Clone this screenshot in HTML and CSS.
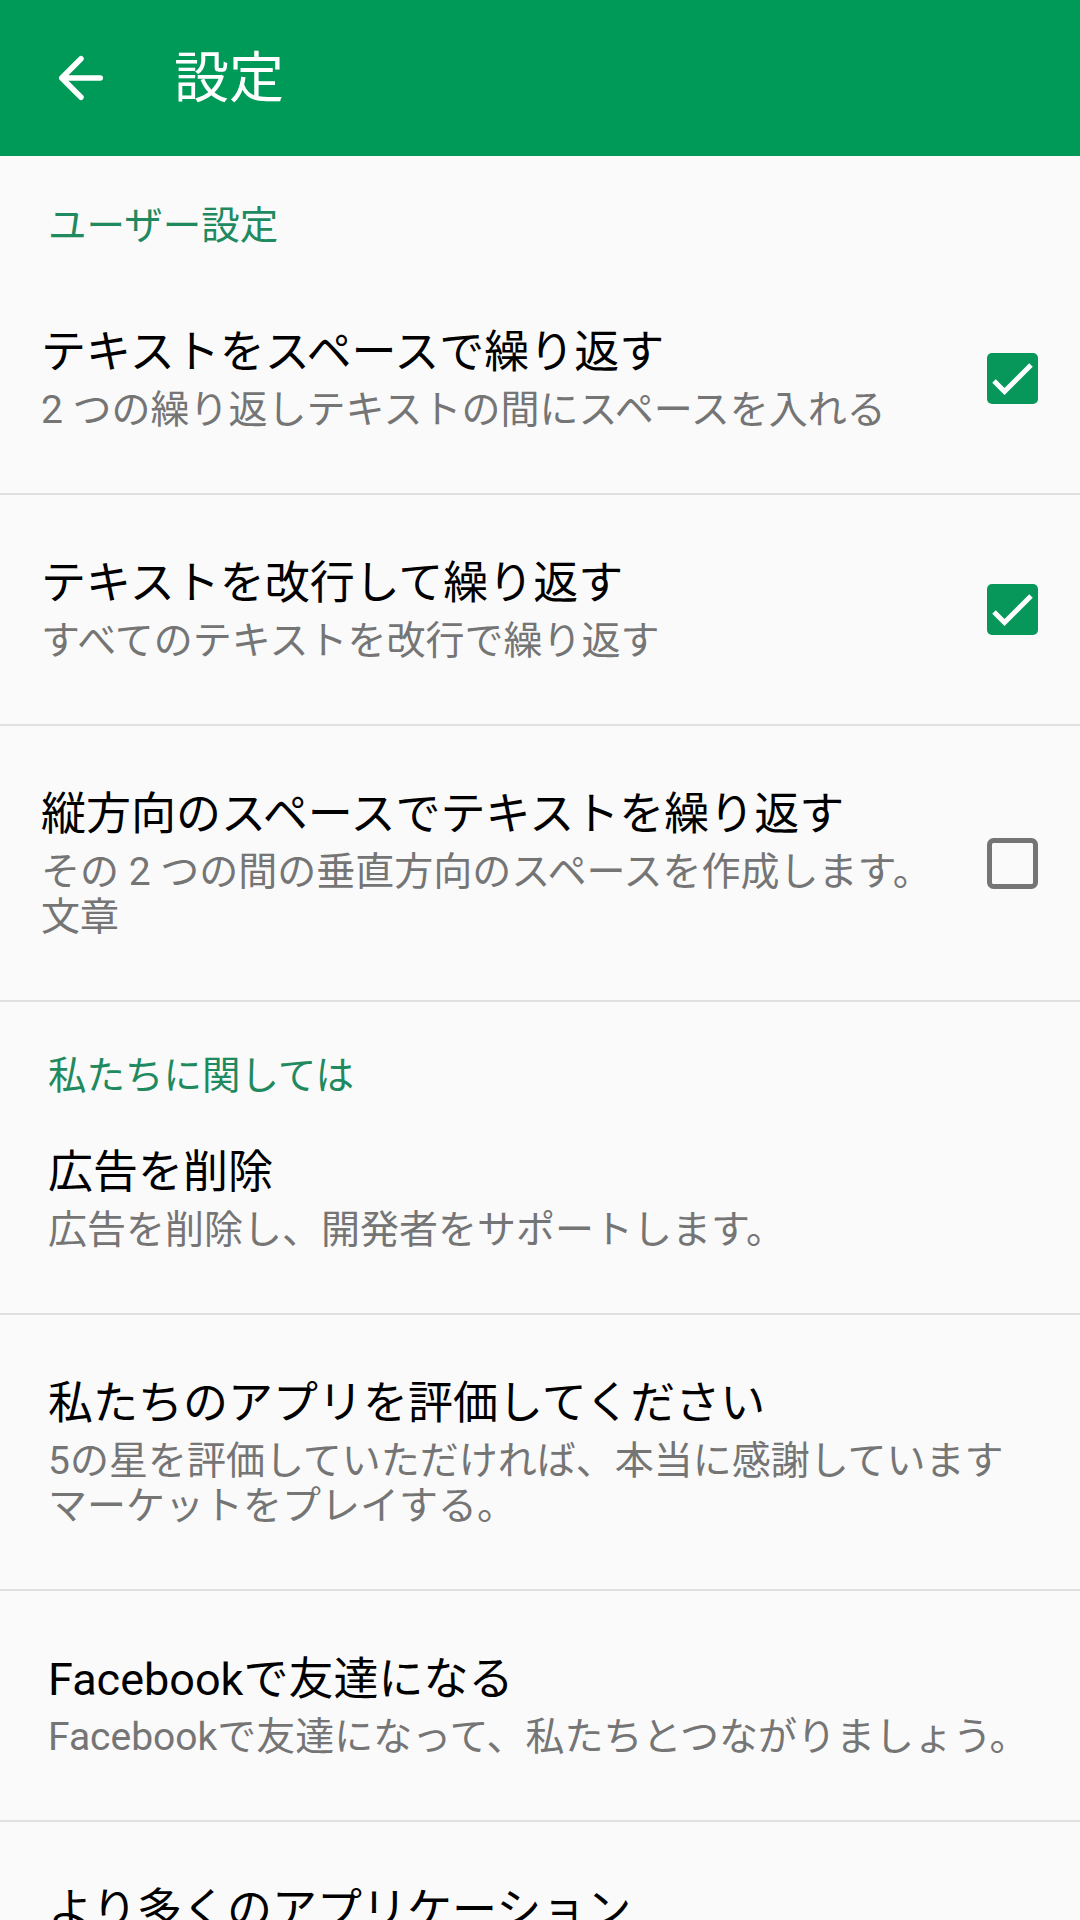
FILE: index.html
```html
<!DOCTYPE html>
<html lang="ja">
<head>
  <meta charset="UTF-8" />
  <meta name="viewport" content="width=device-width, initial-scale=1.0" />
  <title>設定</title>
  <link rel="stylesheet" href="styles.css">
</head>
<body>
  <div class="appbar">
    <svg class="back" width="66" height="66" viewBox="0 0 24 24">
      <path d="M19 12H5M12 5l-7 7 7 7" fill="none" stroke="#fff" stroke-width="2" stroke-linecap="round" stroke-linejoin="round"/>
    </svg>
    <h1 class="appbar-title">設定</h1>
  </div>

  <div class="category">ユーザー設定</div>

  <div class="pref">
    <div class="pref-text">
      <div class="pref-title">テキストをスペースで繰り返す</div>
      <div class="pref-summary">2 つの繰り返しテキストの間にスペースを入れる</div>
    </div>
    <svg class="check" width="51" height="51" viewBox="0 0 51 51">
      <rect x="0" y="0" width="51" height="51" rx="5" fill="#07975a"/>
      <path d="M7 28l10.5 10.5L44 12" fill="none" stroke="#fff" stroke-width="5"/>
    </svg>
  </div>

  <div class="pref">
    <div class="pref-text">
      <div class="pref-title">テキストを改行して繰り返す</div>
      <div class="pref-summary">すべてのテキストを改行で繰り返す</div>
    </div>
    <svg class="check" width="51" height="51" viewBox="0 0 51 51">
      <rect x="0" y="0" width="51" height="51" rx="5" fill="#07975a"/>
      <path d="M7 28l10.5 10.5L44 12" fill="none" stroke="#fff" stroke-width="5"/>
    </svg>
  </div>

  <div class="pref">
    <div class="pref-text">
      <div class="pref-title">縦方向のスペースでテキストを繰り返す</div>
      <div class="pref-summary">その 2 つの間の垂直方向のスペースを作成します。文章</div>
    </div>
    <svg class="check" width="51" height="51" viewBox="0 0 51 51">
      <rect x="2.5" y="2.5" width="46" height="46" rx="4" fill="none" stroke="#757575" stroke-width="5"/>
    </svg>
  </div>

  <div class="category second">私たちに関しては</div>

  <div class="pref plain first">
    <div class="pref-text">
      <div class="pref-title">広告を削除</div>
      <div class="pref-summary">広告を削除し、開発者をサポートします。</div>
    </div>
  </div>

  <div class="pref plain">
    <div class="pref-text">
      <div class="pref-title">私たちのアプリを評価してください</div>
      <div class="pref-summary">5の星を評価していただければ、本当に感謝しています<br>マーケットをプレイする。</div>
    </div>
  </div>

  <div class="pref plain">
    <div class="pref-text">
      <div class="pref-title">Facebookで友達になる</div>
      <div class="pref-summary">Facebookで友達になって、私たちとつながりましょう。</div>
    </div>
  </div>

  <div class="pref plain">
    <div class="pref-text">
      <div class="pref-title">より多くのアプリケーション</div>
    </div>
  </div>
</body>
</html>
```

FILE: styles.css
```css
body {
  margin: 0;
  background: #fafafa;
  font-family: Roboto, "Noto Sans CJK JP", sans-serif;
  width: 1080px;
  height: 1920px;
  overflow: hidden;
}
.appbar {
  display: flex;
  align-items: center;
  height: 156px;
  padding-left: 48px;
  background: #009a58;
  box-sizing: border-box;
}
.back {
  flex: none;
}
.appbar-title {
  margin: 0 0 0 60px;
  font-size: 55px;
  font-weight: normal;
  color: #fff;
  line-height: 66px;
}
.category {
  padding: 48px 48px 16px;
  font-size: 38.5px;
  line-height: 44px;
  color: #1f8a60;
}
.category.second {
  padding-top: 52px;
  padding-bottom: 0;
}
.pref {
  display: flex;
  align-items: center;
  padding: 60px 42px 60px 41px;
  border-bottom: 2px solid #e0e0e0;
}
.pref.plain {
  padding-left: 48px;
}
.pref.first {
  padding-top: 46px;
}
.pref-text {
  flex: 1;
  padding-right: 36px;
}
.pref.plain .pref-text {
  padding-right: 0;
}
.pref-title {
  font-size: 45px;
  line-height: 58px;
  color: #000;
}
.pref-summary {
  margin-top: 6px;
  font-size: 39px;
  line-height: 45px;
  color: #757575;
}
.check {
  flex: none;
}
```
